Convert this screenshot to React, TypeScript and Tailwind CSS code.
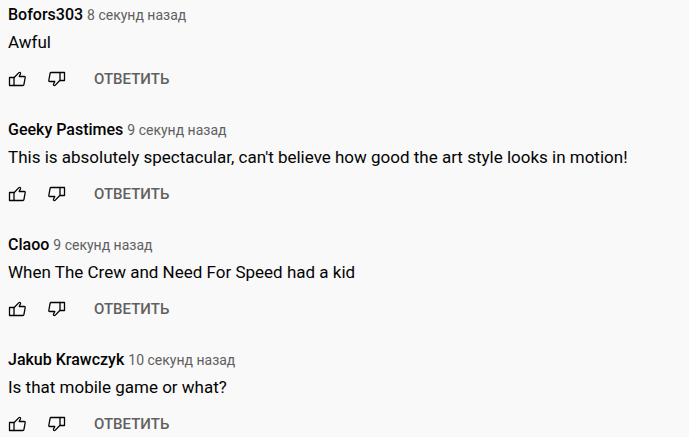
type Comment = {
  author: string;
  time: string;
  text: string;
};

const comments: Comment[] = [
  { author: 'Bofors303', time: '8 секунд назад', text: 'Awful' },
  {
    author: 'Geeky Pastimes',
    time: '9 секунд назад',
    text: "This is absolutely spectacular, can't believe how good the art style looks in motion!",
  },
  { author: 'Claoo', time: '9 секунд назад', text: 'When The Crew and Need For Speed had a kid' },
  { author: 'Jakub Krawczyk', time: '10 секунд назад', text: 'Is that mobile game or what?' },
];

function ThumbIcon({ down = false }: { down?: boolean }) {
  return (
    <svg
      viewBox="0 0 18 16"
      className={down ? 'h-4 w-[18px] rotate-180' : 'h-4 w-[18px]'}
      fill="none"
      stroke="currentColor"
      strokeWidth="1.3"
      strokeLinejoin="round"
      aria-hidden="true"
    >
      <path d="M1.5 6.5H6v8H1.5z" />
      <path d="M6 6.8 10.9 1.6c.4-.4 1-.4 1.4 0 .3.3.4.7.2 1.2L11.2 5.5h5.1c.6 0 1 .4.9 1l-1.3 7.1c-.1.6-.6.9-1.1.9H6" />
    </svg>
  );
}

function CommentItem({ author, time, text }: Comment) {
  return (
    <article>
      <header className="flex items-baseline gap-1">
        <a href="#" className="text-base leading-5 font-medium">
          {author}
        </a>
        <a href="#" className="text-sm leading-5 text-[#606060]">
          {time}
        </a>
      </header>
      <p className="mt-[5px] text-[17px] leading-6">{text}</p>
      <div className="mt-[7px] flex h-9 items-center">
        <button type="button" aria-label="Нравится">
          <ThumbIcon />
        </button>
        <button type="button" aria-label="Не нравится" className="ml-[22px]">
          <ThumbIcon down />
        </button>
        <button type="button" className="ml-7 text-[15px] font-medium text-[#606060]">
          ОТВЕТИТЬ
        </button>
      </div>
    </article>
  );
}

export default function App() {
  return (
    <main className="flex min-h-screen flex-col gap-[23px] overflow-hidden bg-[#f9f9f9] px-2 pt-[5px] font-[Roboto,sans-serif] text-[#030303]">
      {comments.map((comment) => (
        <CommentItem key={comment.author} {...comment} />
      ))}
    </main>
  );
}
